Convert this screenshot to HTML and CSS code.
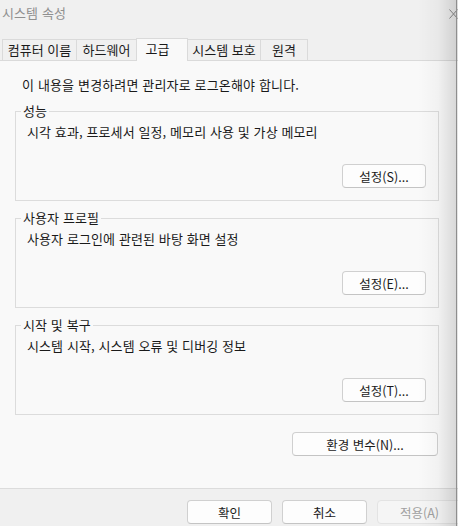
FILE: index.html
```html
<!DOCTYPE html>
<html lang="ko">
<head>
    <meta charset="UTF-8">
    <meta name="viewport" content="width=device-width, initial-scale=1.0">
    <title>시스템 속성</title>
    <link rel="stylesheet" href="styles.css">
</head>
<body>
    <div class="window">
        <div class="titlebar">
            <span class="title">시스템 속성</span>
            <svg class="close" width="9" height="10" viewBox="0 0 9 10">
                <path d="M0.5 0.5 L8.5 9.5 M8.5 0.5 L0.5 9.5" stroke="#8c8c8c" stroke-width="1" fill="none"/>
            </svg>
        </div>

        <!-- Tab strip -->
        <div class="tabs">
            <div class="tab tab-name">컴퓨터 이름</div>
            <div class="tab tab-hw">하드웨어</div>
            <div class="tab tab-adv active">고급</div>
            <div class="tab tab-prot">시스템 보호</div>
            <div class="tab tab-remote">원격</div>
        </div>

        <div class="panel">
            <p class="notice">이 내용을 변경하려면 관리자로 로그온해야 합니다.</p>

            <fieldset class="group">
                <legend>성능</legend>
                <p class="desc">시각 효과, 프로세서 일정, 메모리 사용 및 가상 메모리</p>
                <div class="group-actions">
                    <button class="btn">설정(S)...</button>
                </div>
            </fieldset>

            <fieldset class="group">
                <legend>사용자 프로필</legend>
                <p class="desc">사용자 로그인에 관련된 바탕 화면 설정</p>
                <div class="group-actions">
                    <button class="btn">설정(E)...</button>
                </div>
            </fieldset>

            <fieldset class="group">
                <legend>시작 및 복구</legend>
                <p class="desc">시스템 시작, 시스템 오류 및 디버깅 정보</p>
                <div class="group-actions">
                    <button class="btn">설정(T)...</button>
                </div>
            </fieldset>

            <div class="env-row">
                <button class="btn btn-wide">환경 변수(N)...</button>
            </div>
        </div>

        <div class="footer">
            <button class="btn btn-footer">확인</button>
            <button class="btn btn-footer">취소</button>
            <button class="btn btn-footer" disabled>적용(A)</button>
        </div>

        <div class="edge-shadow"></div>
    </div>
</body>
</html>
```

FILE: styles.css
```css
body {
    margin: 0;
    font-family: "Noto Sans CJK KR", "Noto Sans", sans-serif;
    font-size: 13px;
    color: #1a1a1a;
    background-color: #f0f0f0;
    overflow: hidden;
}
.window {
    position: relative;
    width: 458px;
    height: 526px;
    overflow: hidden;
}
.titlebar {
    height: 38px;
    display: flex;
    justify-content: space-between;
    align-items: flex-start;
    padding-left: 2px;
}
.title {
    line-height: 26px;
    color: #8f8f8f;
    letter-spacing: 0.1px;
}
.close {
    margin-top: 9px;
}

/* tabs */
.tabs {
    height: 22px;
    display: flex;
    align-items: flex-end;
    padding-left: 2px;
    border-bottom: 1px solid #dadada;
}
.tab {
    box-sizing: border-box;
    height: 21px;
    line-height: 20px;
    text-align: center;
    border: 1px solid #dadada;
    border-bottom: none;
    background-color: #f0f0f0;
    color: #1a1a1a;
    margin-left: -1px;
}
.tab:first-child {
    margin-left: 0;
}
.tab-name { width: 75px; }
.tab-hw { width: 61px; }
.tab-adv { width: 52px; }
.tab-prot { width: 74px; }
.tab-remote { width: 48px; }
.tab.active {
    height: 23px;
    margin-bottom: -1px;
    line-height: 19px;
    padding-right: 9px;
    background-color: #f9f9f9;
    position: relative;
}

/* main panel */
.panel {
    height: 427px;
    box-sizing: border-box;
    background-color: #f9f9f9;
    padding-top: 16px;
}
.notice {
    margin: 0 0 10px 22px;
    line-height: 16px;
    letter-spacing: 0.15px;
}
.group {
    margin: 9px 19px 0 15px;
    padding: 0;
    border: 1px solid #dcdcdc;
    min-width: 0;
}
.group:first-of-type {
    margin-top: 0;
}
.group legend {
    margin-left: 5px;
    padding: 0 2px;
    line-height: 16px;
    letter-spacing: 0.1px;
}
.desc {
    margin: 5px 0 0 11px;
    line-height: 16px;
    letter-spacing: 0.1px;
}
.group-actions {
    display: flex;
    justify-content: flex-end;
    margin-top: 24px;
    padding: 0 12px 12px 0;
}
.env-row {
    display: flex;
    justify-content: flex-end;
    margin-top: 17px;
    padding-right: 20px;
}

/* buttons */
.btn {
    box-sizing: border-box;
    flex-shrink: 0;
    width: 84px;
    height: 24px;
    padding: 0;
    font-family: inherit;
    font-size: 12.5px;
    color: #1a1a1a;
    background-color: #fdfdfd;
    border: 1px solid #d0d0d0;
    border-bottom-color: #c4c4c4;
    border-radius: 4px;
}
.btn-wide {
    width: 146px;
}
.btn-footer {
    width: 85px;
}
.btn:disabled {
    color: #a0a0a0;
    background-color: #f5f5f5;
    border-color: #e3e3e3;
}

.footer {
    height: 37px;
    display: flex;
    gap: 10px;
    padding: 11px 0 0 187px;
    border-top: 1px solid #dcdcdc;
    background-color: #f0f0f0;
}

/* shade from the neighbouring window on the right */
.edge-shadow {
    position: absolute;
    top: 0;
    right: 0;
    width: 40px;
    height: 100%;
    pointer-events: none;
    background: linear-gradient(to right,
        rgba(0, 0, 0, 0) 0,
        rgba(0, 0, 0, 0.03) 20px,
        rgba(0, 0, 0, 0.13) 38px,
        #8e8e8e 38px,
        #8e8e8e 39px,
        rgba(0, 0, 0, 0.08) 39px);
}
```
